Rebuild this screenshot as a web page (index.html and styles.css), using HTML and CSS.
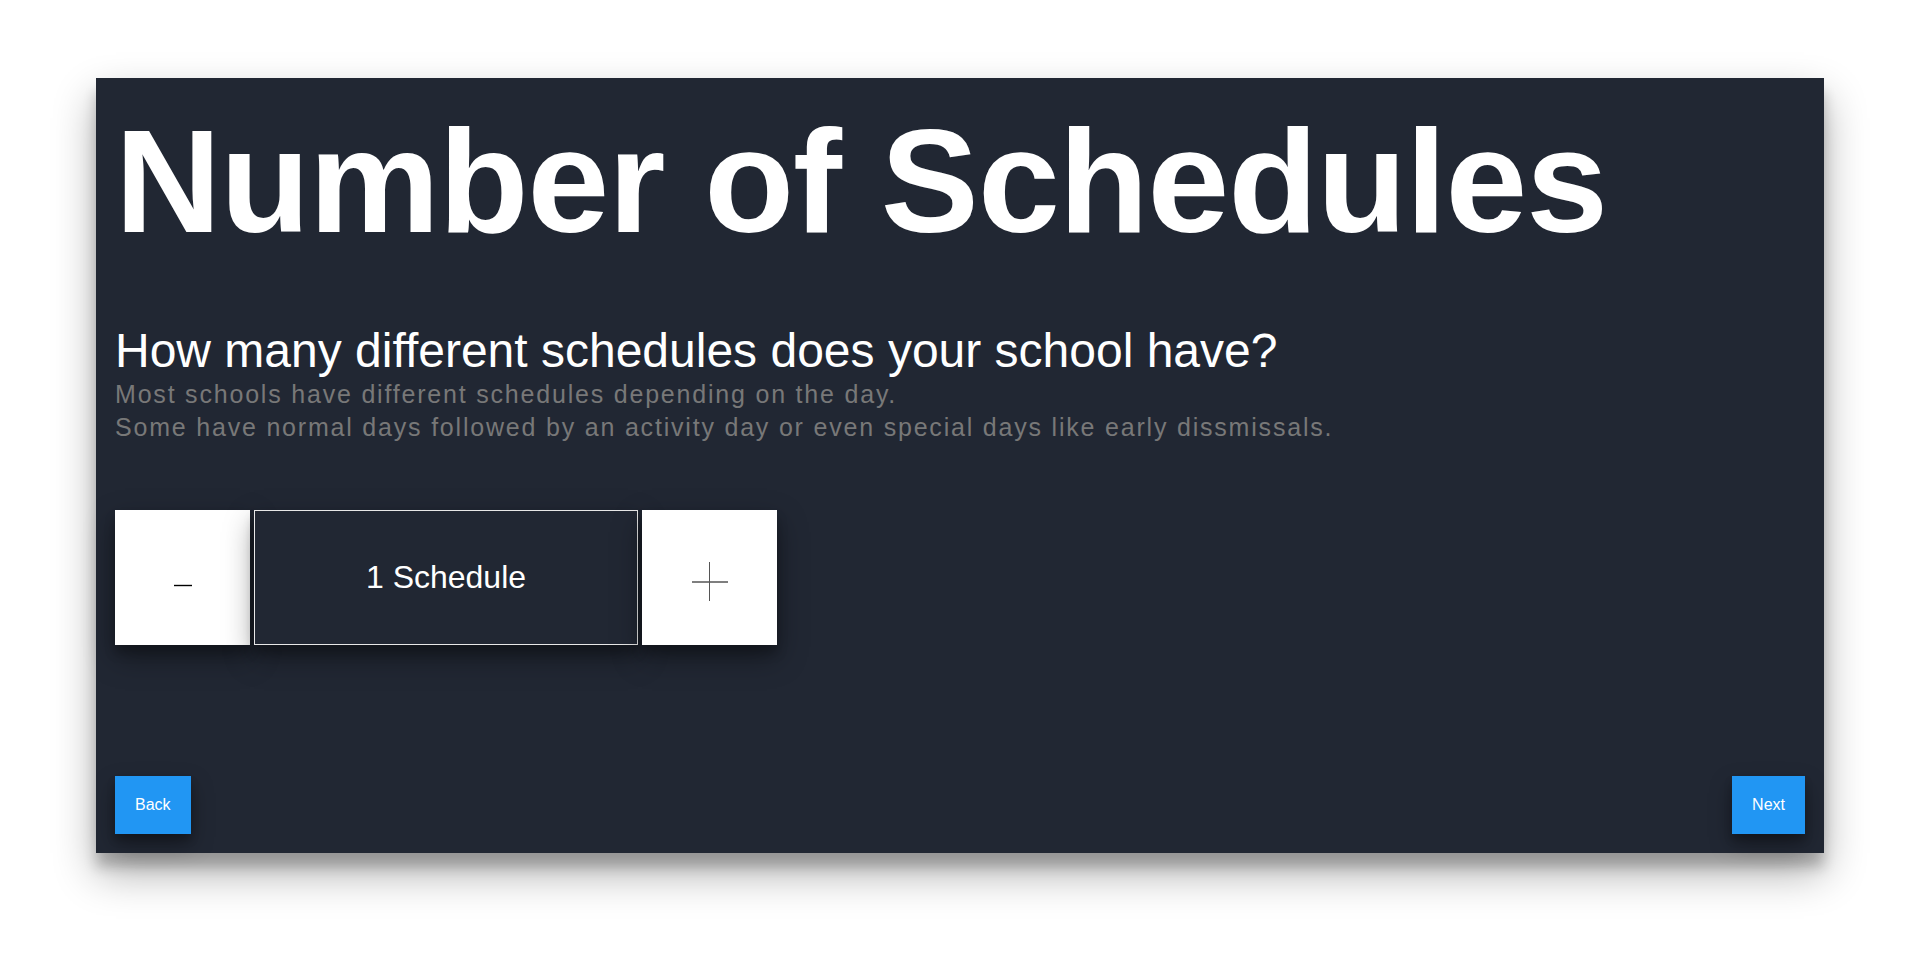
FILE: index.html
```html
<!DOCTYPE html>
<html lang="en">
<head>
<meta charset="utf-8">
<title>Number of Schedules</title>
<link rel="stylesheet" href="styles.css">
</head>
<body>
<main class="card">
  <section class="content">
    <h1 class="title">Number of Schedules</h1>
    <h2 class="question">How many different schedules does your school have?</h2>
    <p class="hint">Most schools have different schedules depending on the day.<br>Some have normal days followed by an activity day or even special days like early dissmissals.</p>
    <div class="stepper">
      <button class="step-btn" type="button" aria-label="Decrease">
        <svg class="icon-minus" width="20" height="20" viewBox="0 0 20 20"><line x1="1" y1="10.5" x2="19" y2="10.5" stroke="#000" stroke-width="1.4"/></svg>
      </button>
      <div class="count">1 Schedule</div>
      <button class="step-btn" type="button" aria-label="Increase">
        <svg class="icon-plus" width="38" height="40" viewBox="0 0 38 40"><line x1="1" y1="20" x2="37" y2="20" stroke="#000" stroke-width="1.2"/><line x1="18.5" y1="0" x2="18.5" y2="39" stroke="#555" stroke-width="1"/></svg>
      </button>
    </div>
  </section>
  <nav class="nav">
    <button class="nav-btn" type="button">Back</button>
    <button class="nav-btn" type="button">Next</button>
  </nav>
</main>
</body>
</html>
```
FILE: styles.css
```css
html, body {
  margin: 0;
  padding: 0;
  background: #ffffff;
}

body {
  box-sizing: border-box;
  min-height: 100vh;
  padding-top: 78px;
  font-family: "Liberation Sans", Arial, sans-serif;
}

.card {
  box-sizing: border-box;
  width: 90vw;
  height: 80vh;
  margin: 0 auto;
  padding: 19px;
  background: #212733;
  color: #ffffff;
  display: flex;
  flex-direction: column;
  justify-content: space-between;
  box-shadow: 0 20px 40px rgba(0, 0, 0, 0.32), 0 14px 12px rgba(0, 0, 0, 0.2);
}

.content {
  display: flex;
  flex-direction: column;
  align-items: flex-start;
}

.title {
  margin: 0;
  font-size: 147px;
  font-weight: 700;
  letter-spacing: -1px;
  line-height: 1.15;
}

.question {
  margin: 56.5px 0 0 0;
  font-size: 48px;
  font-weight: 400;
  line-height: 1.15;
}

.hint {
  margin: 0;
  font-size: 25px;
  letter-spacing: 1.8px;
  line-height: 33.5px;
  color: #787878;
}

.stepper {
  margin-top: 65px;
  display: flex;
  gap: 4px;
}

.step-btn {
  width: 135px;
  height: 135px;
  border: none;
  padding: 0;
  background: #ffffff;
  display: flex;
  align-items: center;
  justify-content: center;
  box-shadow: 0 12px 28px rgba(0, 0, 0, 0.38), 0 8px 10px rgba(0, 0, 0, 0.22);
}

.icon-minus {
  margin-top: 15px;
}

.icon-plus {
  margin-top: 9px;
}

.count {
  box-sizing: border-box;
  width: 384px;
  height: 135px;
  border: 1px solid #e8e8e8;
  background: #212733;
  display: flex;
  align-items: center;
  justify-content: center;
  font-size: 32px;
  color: #ffffff;
  box-shadow: 0 12px 28px rgba(0, 0, 0, 0.38), 0 8px 10px rgba(0, 0, 0, 0.22);
}

.nav {
  display: flex;
  justify-content: space-between;
  align-items: flex-end;
}

.nav-btn {
  height: 58px;
  padding: 0 20px;
  border: none;
  background: #2196f3;
  color: #ffffff;
  font-family: "Liberation Sans", Arial, sans-serif;
  font-size: 16px;
  box-shadow: 0 10px 22px rgba(0, 0, 0, 0.35), 0 6px 8px rgba(0, 0, 0, 0.2);
}
```
